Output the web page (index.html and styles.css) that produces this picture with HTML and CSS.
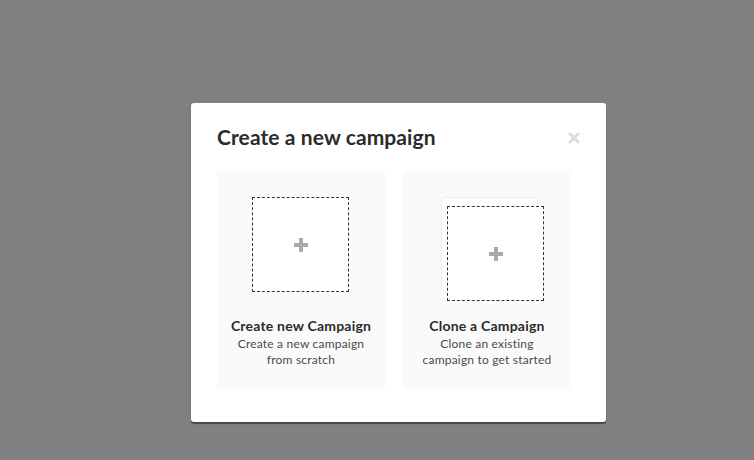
FILE: index.html
```html
<!DOCTYPE html>
<html>
<head>
<meta charset="utf-8">
<link rel="stylesheet" href="styles.css">
</head>
<body>
<div class="modal">
  <div class="header">
    <h1 class="title">Create a new campaign</h1>
    <svg class="close" width="12" height="12" viewBox="0 0 12 12"><path d="M2 2L10 10M10 2L2 10" stroke="#dcdcdc" stroke-width="3" stroke-linecap="round"/></svg>
  </div>
  <div class="cards">
    <div class="card">
      <div class="icon">
        <div class="box"><span class="plus"></span></div>
      </div>
      <div class="card-title">Create new Campaign</div>
      <div class="card-desc">Create a new campaign<br>from scratch</div>
    </div>
    <div class="card">
      <div class="icon icon-clone">
        <div class="back"></div>
        <div class="box front"><span class="plus"></span></div>
      </div>
      <div class="card-title">Clone a Campaign</div>
      <div class="card-desc">Clone an existing<br>campaign to get started</div>
    </div>
  </div>
</div>
</body>
</html>
```

FILE: styles.css
```css
html, body {
  margin: 0;
  height: 100%;
}
body {
  background: #808080;
  padding: 103px 0 0 191px;
  box-sizing: border-box;
  font-family: Lato, "Noto Sans", sans-serif;
}
.modal {
  width: 415px;
  height: 319px;
  background: #fff;
  border-radius: 3px;
  box-shadow: 0 2px 1px rgba(0,0,0,0.45);
  box-sizing: border-box;
  padding: 21px 26px 0 26px;
}
.header {
  display: flex;
  align-items: center;
  justify-content: space-between;
  height: 26px;
  margin-bottom: 21px;
}
.title {
  margin: 0;
  font-size: 21px;
  line-height: 26px;
  font-weight: 700;
  color: #2b2b2b;
  letter-spacing: 0.1px;
}
.close {
  margin-right: 0;
  margin-top: 2px;
}
.cards {
  display: flex;
  gap: 18px;
}
.card {
  width: 168px;
  height: 218px;
  background: #fafafa;
  box-sizing: border-box;
  padding-top: 26px;
  text-align: center;
}
.icon {
  height: 105px;
  display: flex;
  justify-content: flex-start;
  padding-left: 35px;
  margin-bottom: 16px;
}
.box {
  width: 97px;
  height: 95px;
  box-sizing: border-box;
  border: 1px dashed #333;
  background: #fff;
  display: flex;
  align-items: center;
  justify-content: center;
}
.plus {
  position: relative;
  width: 14px;
  height: 14px;
}
.plus::before, .plus::after {
  content: "";
  position: absolute;
  background: #aaa;
}
.plus::before {
  left: 0; right: 0; top: 5px; height: 4px;
}
.plus::after {
  top: 0; bottom: 0; left: 5px; width: 4px;
}
.icon-clone {
  position: relative;
  padding-left: 38px;
}
.back {
  width: 97px;
  height: 95px;
  box-sizing: border-box;
  border: 1px solid #efefef;
  border-radius: 4px;
  background: #fff;
}
.front {
  position: absolute;
  left: 44px;
  top: 9px;
}
.card-title {
  font-size: 14px;
  line-height: 16px;
  font-weight: 700;
  color: #2b2b2b;
  letter-spacing: 0.2px;
  margin-bottom: 2px;
}
.card-desc {
  font-size: 12px;
  line-height: 16px;
  color: #4a4a4a;
  letter-spacing: 0.2px;
}
```
